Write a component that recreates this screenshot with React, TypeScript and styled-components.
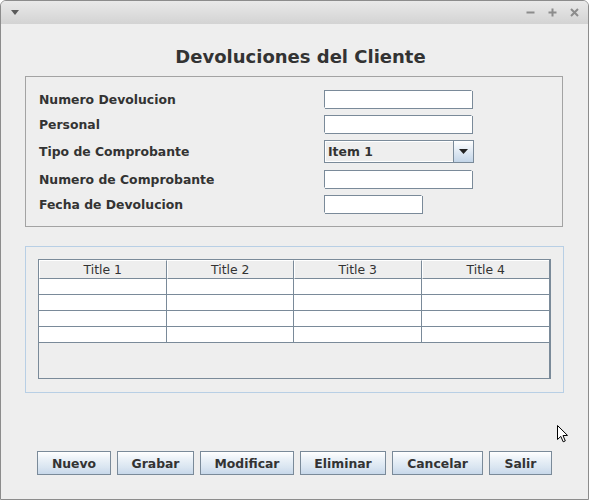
import styled, { createGlobalStyle } from "styled-components";

const GlobalStyle = createGlobalStyle`
  html, body {
    margin: 0;
    padding: 0;
    background: #ffffff;
  }
  body {
    font-family: "DejaVu Sans", "Liberation Sans", sans-serif;
    color: #333333;
  }
`;

const Window = styled.div`
  position: relative;
  width: 589px;
  height: 500px;
  box-sizing: border-box;
  border: 1px solid #8c8c8c;
  border-radius: 6px 6px 0 0;
  background: #eeeeee;
  overflow: hidden;
  display: flex;
  flex-direction: column;
`;

const TitleBar = styled.div`
  height: 23px;
  flex: none;
  display: flex;
  align-items: center;
  justify-content: space-between;
  padding: 0 9px 0 10px;
  background: linear-gradient(#e9e9e9, #d3d3d3);
`;

const WinButtons = styled.div`
  display: flex;
  gap: 13px;
  align-items: center;
`;

const Body = styled.div`
  flex: 1;
  display: flex;
  flex-direction: column;
  padding: 0 24px;
`;

const Title = styled.h1`
  margin: 22px 0 8px 12px;
  font-size: 18px;
  line-height: 22px;
  font-weight: bold;
  text-align: center;
  color: #333333;
`;

const FormPanel = styled.div`
  margin-right: 1px;
  border: 1px solid #a3a3a3;
  padding: 13px 12px 13px 13px;
  display: grid;
  grid-template-columns: 285px 1fr;
  row-gap: 7px;
  align-items: center;
`;

const Label = styled.div`
  font-size: 12.4px;
  font-weight: bold;
`;

const TextField = styled.div<{ $w: number }>`
  width: ${(p) => p.$w}px;
  height: 18px;
  box-sizing: border-box;
  background: #ffffff;
  border: 1px solid #7a8a99;
  border-right-color: #ffffff;
  border-bottom-color: #ffffff;
  box-shadow: 1px 1px 0 #7a8a99;
`;

const Combo = styled.div`
  width: 150px;
  height: 23px;
  box-sizing: border-box;
  display: flex;
  border: 1px solid #7a8a99;
  background: #e6e6e6;
`;

const ComboText = styled.div`
  flex: 1;
  display: flex;
  align-items: center;
  padding-left: 2px;
  font-size: 12.4px;
  font-weight: bold;
  border: 1px solid #ffffff;
  border-right: none;
  background: #eeeeee;
`;

const ComboArrow = styled.div`
  width: 19px;
  border-left: 1px solid #7a8a99;
  display: flex;
  align-items: center;
  justify-content: center;
  background: linear-gradient(#ffffff, #dde7f2 55%, #c3d5e8);
`;

const TablePanel = styled.div`
  margin-top: 19px;
  border: 1px solid #b8cfe5;
  padding: 12px 12px 13px;
`;

const Table = styled.div`
  height: 120px;
  box-sizing: border-box;
  border: 1px solid #7a8a99;
  border-right-width: 2px;
  display: grid;
  grid-template-columns: repeat(4, 1fr);
  grid-template-rows: 19px repeat(4, 16px);
  align-content: start;
`;

const HeaderCell = styled.div<{ $last?: boolean }>`
  font-size: 12.4px;
  line-height: 18px;
  text-align: center;
  background: #eeeeee;
  border-top: 1px solid #ffffff;
  border-left: 1px solid #ffffff;
  border-right: ${(p) => (p.$last ? "none" : "1px solid #7a8a99")};
  border-bottom: 1px solid #7a8a99;
  box-sizing: border-box;
`;

const Cell = styled.div<{ $last?: boolean }>`
  background: #ffffff;
  box-sizing: border-box;
  border-right: ${(p) => (p.$last ? "none" : "1px solid #7a8a99")};
  border-bottom: 1px solid #7a8a99;
`;

const ButtonRow = styled.div`
  margin-top: auto;
  margin-bottom: 24px;
  display: flex;
  justify-content: center;
  gap: 6px;
`;

const Button = styled.button<{ $w: number }>`
  width: ${(p) => p.$w}px;
  height: 24px;
  padding: 0;
  border: 1px solid #7a8a99;
  background: linear-gradient(#ffffff, #ecf2f8 30%, #d9e5f1 70%, #c8d8ea);
  font-family: "DejaVu Sans", "Liberation Sans", sans-serif;
  font-size: 12.4px;
  font-weight: bold;
  color: #333333;
`;

const Cursor = styled.svg`
  position: absolute;
  left: 555px;
  top: 423px;
`;

const fields = [
  { label: "Numero Devolucion", w: 148 },
  { label: "Personal", w: 148 },
  { label: "Tipo de Comprobante", w: 0 },
  { label: "Numero de Comprobante", w: 148 },
  { label: "Fecha de Devolucion", w: 98 },
];

const buttons = [
  { text: "Nuevo", w: 74 },
  { text: "Grabar", w: 77 },
  { text: "Modificar", w: 94 },
  { text: "Eliminar", w: 86 },
  { text: "Cancelar", w: 91 },
  { text: "Salir", w: 63 },
];

const titles = ["Title 1", "Title 2", "Title 3", "Title 4"];

export default function App() {
  return (
    <>
      <GlobalStyle />
      <Window>
        <TitleBar>
          <svg width="8" height="5" viewBox="0 0 8 5">
            <path d="M0 0 L8 0 L4 5 Z" fill="#5a5a5a" />
          </svg>
          <WinButtons>
            <svg width="9" height="9" viewBox="0 0 9 9">
              <rect x="0.5" y="3.5" width="8" height="2" fill="#8c8c8c" />
            </svg>
            <svg width="9" height="9" viewBox="0 0 9 9">
              <rect x="0.5" y="3.5" width="8" height="2" fill="#8c8c8c" />
              <rect x="3.5" y="0.5" width="2" height="8" fill="#8c8c8c" />
            </svg>
            <svg width="9" height="9" viewBox="0 0 9 9">
              <path d="M1 1 L8 8 M8 1 L1 8" stroke="#8c8c8c" strokeWidth="2" />
            </svg>
          </WinButtons>
        </TitleBar>
        <Body>
          <Title>Devoluciones del Cliente</Title>
          <FormPanel>
            {fields.map((f) => (
              <>
                <Label key={f.label}>{f.label}</Label>
                {f.w ? (
                  <TextField $w={f.w} />
                ) : (
                  <Combo>
                    <ComboText>Item 1</ComboText>
                    <ComboArrow>
                      <svg width="9" height="5" viewBox="0 0 9 5">
                        <path d="M0 0 L9 0 L4.5 5 Z" fill="#222222" />
                      </svg>
                    </ComboArrow>
                  </Combo>
                )}
              </>
            ))}
          </FormPanel>
          <TablePanel>
            <Table>
              {titles.map((t, i) => (
                <HeaderCell key={t} $last={i === 3}>{t}</HeaderCell>
              ))}
              {Array.from({ length: 16 }).map((_, i) => (
                <Cell key={i} $last={i % 4 === 3} />
              ))}
            </Table>
          </TablePanel>
          <ButtonRow>
            {buttons.map((b) => (
              <Button key={b.text} $w={b.w}>{b.text}</Button>
            ))}
          </ButtonRow>
        </Body>
        <Cursor width="13" height="20" viewBox="0 0 13 20">
          <path
            d="M1.5 1.5 L1.5 15.5 L4.8 12.4 L7.2 17.8 L9.3 16.9 L7 11.6 L11.5 11.4 Z"
            fill="#ffffff"
            stroke="#000000"
            strokeWidth="1"
            strokeLinejoin="miter"
          />
        </Cursor>
      </Window>
    </>
  );
}
